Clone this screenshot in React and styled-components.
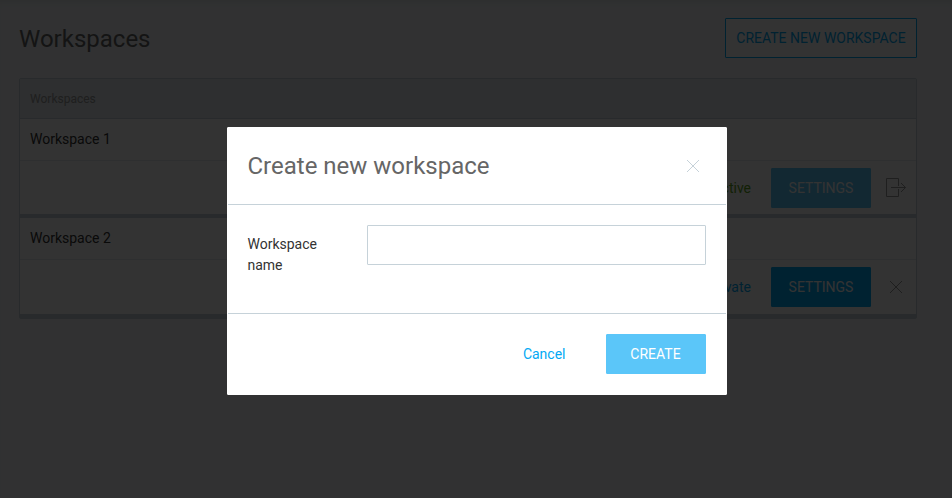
import React from 'react';
import styled, { createGlobalStyle } from 'styled-components';

const GlobalStyle = createGlobalStyle`
  * { box-sizing: border-box; }
  body {
    margin: 0;
    background: #f2f6f8;
    color: #333;
    font: 14px/21px Roboto, sans-serif;
    overflow: hidden;
  }
  button, input { font: inherit; }
`;

const Page = styled.main`
  height: 498px;
  padding: 18px 35px 0 19px;
  box-shadow: inset 0 6px 6px -4px rgba(0, 0, 0, 0.08);
`;

const PageHeader = styled.header`
  display: flex;
  justify-content: space-between;
  height: 60px;
`;

const PageTitle = styled.h1`
  margin: 0;
  font-size: 24px;
  line-height: 42px;
  font-weight: 400;
  color: #666;
`;

const Button = styled.button`
  width: ${({ $width }) => $width || 100}px;
  height: 40px;
  padding: 0;
  border: 1px solid ${({ $faded }) => ($faded ? '#5bc6f9' : '#03a9f4')};
  border-radius: 1px;
  background: ${({ $outline, $faded }) => ($outline ? '#fff' : $faded ? '#5bc6f9' : '#03a9f4')};
  color: ${({ $outline }) => ($outline ? '#03a9f4' : '#fff')};
  text-transform: uppercase;
  white-space: nowrap;
`;

const Table = styled.section`
  border: 1px solid #c6d2d9;
  border-radius: 2px;
  background: #fff;
`;

const TableHeader = styled.div`
  height: 40px;
  padding-left: 10px;
  border-bottom: 1px solid #c6d2d9;
  background: #e4eaee;
  color: #999;
  font-size: 12px;
  line-height: 40px;
`;

const Item = styled.article`
  border-bottom: 4px solid #c6d2d9;
`;

const ItemName = styled.div`
  height: 42px;
  padding-left: 10px;
  border-bottom: 1px solid #e4eaee;
  line-height: 41px;
`;

const ItemActions = styled.div`
  display: flex;
  justify-content: flex-end;
  align-items: flex-start;
  height: ${({ $height }) => $height}px;
  padding-top: 7px;
`;

const Status = styled.span`
  margin-right: 20px;
  line-height: 40px;
  color: ${({ $active }) => ($active ? '#5ca320' : '#03a9f4')};
`;

const ActionIcon = styled.div`
  display: flex;
  align-items: center;
  justify-content: center;
  width: 45px;
  height: 40px;
  padding-left: 5px;
  color: #999;
`;

const Overlay = styled.div`
  position: fixed;
  inset: 0;
  padding: 127px 225px 0 227px;
  background: rgba(0, 0, 0, 0.8);
`;

const Dialog = styled.div`
  width: 500px;
  height: 268px;
  border: 1px solid #fff;
  border-radius: 1px;
  background: #fff;
`;

const DialogHeader = styled.header`
  display: flex;
  align-items: center;
  justify-content: space-between;
  height: 77px;
  padding: 0 26px 0 19.5px;
  border-bottom: 1px solid #c6d2d9;
`;

const DialogTitle = styled.h2`
  margin: 0;
  font-size: 24px;
  line-height: 36px;
  font-weight: 400;
  color: #666;
`;

const CloseButton = styled.button`
  display: flex;
  padding: 0;
  border: 0;
  background: none;
  color: #c6d2d9;
`;

const DialogBody = styled.div`
  display: flex;
  justify-content: space-between;
  height: 109px;
  padding: 20px 20px 0 19.5px;
  border-bottom: 1px solid #c6d2d9;
`;

const Label = styled.label`
  width: 119px;
  padding: 9px 40px 0 0;
`;

const TextInput = styled.input`
  width: 339px;
  height: 40px;
  padding: 0 10px;
  border: 1px solid #c6d2d9;
  border-radius: 1px;
  outline: 0;
`;

const DialogFooter = styled.footer`
  display: flex;
  justify-content: flex-end;
  gap: 40.5px;
  padding: 20px 20px 0;
`;

const SubmitButton = styled(Button)`
  padding-right: 1px;
`;

const CancelLink = styled.a`
  line-height: 40px;
  color: #03a9f4;
`;

const CrossIcon = () => (
  <svg width="14" height="14" viewBox="0 0 14 14" fill="none" stroke="currentColor">
    <path d="M1 1 13 13M13 1 1 13" />
  </svg>
);

const LeaveIcon = () => (
  <svg width="21" height="20" viewBox="0 0 21 20" fill="none" stroke="currentColor">
    <path d="M12.5 8V.5H.5v18h12V11M5 9.5h14.5M15 5l4.5 4.5L15 14" />
  </svg>
);

export default function App() {
  return (
    <>
      <GlobalStyle />
      <Page>
        <PageHeader>
          <PageTitle>Workspaces</PageTitle>
          <Button $outline $width={192}>Create new workspace</Button>
        </PageHeader>
        <Table>
          <TableHeader>Workspaces</TableHeader>
          <Item>
            <ItemName>Workspace 1</ItemName>
            <ItemActions $height={53}>
              <Status $active>Active</Status>
              <Button $faded>Settings</Button>
              <ActionIcon><LeaveIcon /></ActionIcon>
            </ItemActions>
          </Item>
          <Item>
            <ItemName>Workspace 2</ItemName>
            <ItemActions $height={54}>
              <Status>Activate</Status>
              <Button>Settings</Button>
              <ActionIcon><CrossIcon /></ActionIcon>
            </ItemActions>
          </Item>
        </Table>
      </Page>
      <Overlay>
        <Dialog role="dialog" aria-modal="true">
          <DialogHeader>
            <DialogTitle>Create new workspace</DialogTitle>
            <CloseButton aria-label="Close"><CrossIcon /></CloseButton>
          </DialogHeader>
          <DialogBody>
            <Label htmlFor="workspace-name">Workspace name</Label>
            <TextInput id="workspace-name" />
          </DialogBody>
          <DialogFooter>
            <CancelLink>Cancel</CancelLink>
            <SubmitButton $faded>Create</SubmitButton>
          </DialogFooter>
        </Dialog>
      </Overlay>
    </>
  );
}
